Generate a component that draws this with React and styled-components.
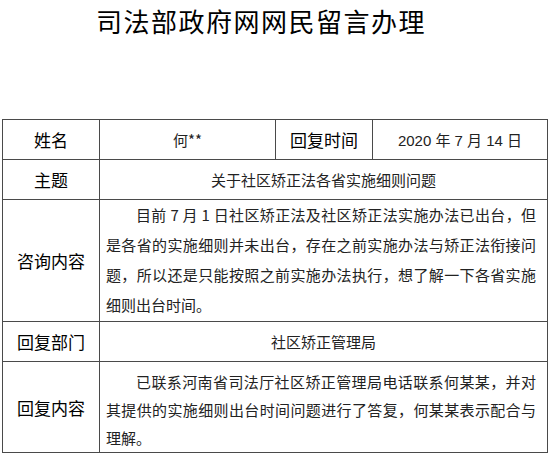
import React from 'react'
import styled, { createGlobalStyle } from 'styled-components'

const GlobalStyle = createGlobalStyle`
    body {
        margin: 0;
        background: #fff;
        color: #111;
        font-family: "Noto Sans CJK SC", "Noto Sans", sans-serif;
    }
`

const consult = [
    '目前 7 月 1 日社区矫正法及社区矫正法实施办法已出台，但',
    '是各省的实施细则并未出台，存在之前实施办法与矫正法衔接问',
    '题，所以还是只能按照之前实施办法执行，想了解一下各省实施',
    '细则出台时间。'
]

const reply = [
    '已联系河南省司法厅社区矫正管理局电话联系何某某，并对',
    '其提供的实施细则出台时间问题进行了答复，何某某表示配合与',
    '理解。'
]

const App = () => {

    const renderLines = (lines) => lines.map((text, i) => (
        <Line key={i} $first={i === 0} $last={i === lines.length - 1}>{text}</Line>
    ))

    return (
        <Page>
            <GlobalStyle />
            <Title>司法部政府网网民留言办理</Title>
            <Table>
                <Label>姓名</Label>
                <Value>何**</Value>
                <Label>回复时间</Label>
                <Value $latin>2020 年 7 月 14 日</Value>

                <Label>主题</Label>
                <Value $span>关于社区矫正法各省实施细则问题</Value>

                <Label>咨询内容</Label>
                <Body $lh={30} $top={0}>{renderLines(consult)}</Body>

                <Label>回复部门</Label>
                <Value $span>社区矫正管理局</Value>

                <Label>回复内容</Label>
                <Body $lh={28} $top={6}>{renderLines(reply)}</Body>
            </Table>
        </Page>
    )
}

export default App

const Page = styled.div`
    width: 550px;
    height: 454px;
    overflow: hidden;
`

const Title = styled.h1`
    margin: 0 0 77px;
    padding-right: 28px;
    height: 42px;
    line-height: 42px;
    text-align: center;
    font-size: 26px;
    font-weight: 400;
    letter-spacing: 1.5px;
    color: #000;
`

const Table = styled.div`
    display: grid;
    grid-template-columns: 96px 175px 96px 174px;
    grid-template-rows: 39px 39px 121px 39px 90px;
    gap: 1px;
    padding: 1px;
    margin-left: 2px;
    width: 544px;
    background: #4a4a4a;
`

const Label = styled.div`
    display: flex;
    align-items: center;
    justify-content: center;
    background: #fff;
    font-size: 17px;
    font-weight: 400;
    color: #000;
`

const Value = styled.div`
    grid-column: ${p => p.$span ? '2 / 5' : 'auto'};
    display: flex;
    align-items: center;
    justify-content: center;
    background: #fff;
    font-size: 15px;
    font-family: ${p => p.$latin
        ? '"Liberation Sans", "Noto Sans CJK SC", sans-serif'
        : '"Noto Sans CJK SC", sans-serif'};
    color: #222;
`

const Body = styled.div`
    grid-column: 2 / 5;
    background: #fff;
    padding: ${p => p.$top}px 11px 0 6px;
    font-size: 15px;
    line-height: ${p => p.$lh}px;
    color: #222;
`

const Line = styled.div`
    white-space: nowrap;
    text-align: ${p => p.$last ? 'left' : 'justify'};
    text-align-last: ${p => p.$last ? 'left' : 'justify'};
    text-indent: ${p => p.$first ? '2em' : '0'};
`
